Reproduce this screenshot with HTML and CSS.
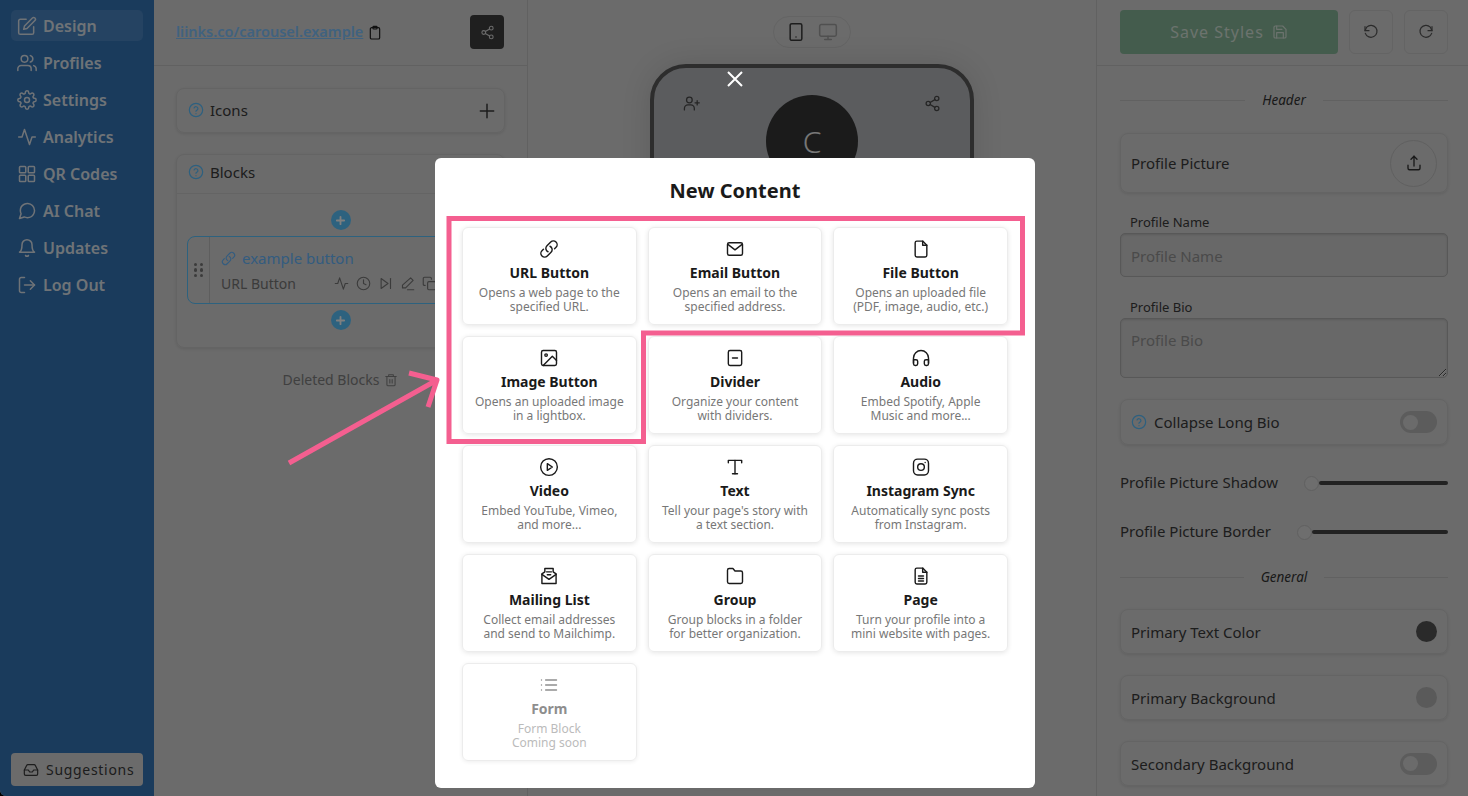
FILE: index.html
```html
<!DOCTYPE html>
<html lang="en">
<head>
    <meta charset="UTF-8">
    <meta name="viewport" content="width=device-width, initial-scale=1.0">
    <title>New Content</title>
    <link rel="stylesheet" href="styles.css">
</head>
<body>

<!-- Icon sprite -->
<svg class="sprite" xmlns="http://www.w3.org/2000/svg">
    <symbol id="i-edit" viewBox="0 0 24 24"><path d="M11 4H4a2 2 0 0 0-2 2v14a2 2 0 0 0 2 2h14a2 2 0 0 0 2-2v-7"/><path d="M18.5 2.5a2.121 2.121 0 0 1 3 3L12 15l-4 1 1-4 9.5-9.5z"/></symbol>
    <symbol id="i-users" viewBox="0 0 24 24"><path d="M17 21v-2a4 4 0 0 0-4-4H5a4 4 0 0 0-4 4v2"/><circle cx="9" cy="7" r="4"/><path d="M23 21v-2a4 4 0 0 0-3-3.87"/><path d="M16 3.13a4 4 0 0 1 0 7.75"/></symbol>
    <symbol id="i-gear" viewBox="0 0 24 24"><circle cx="12" cy="12" r="3"/><path d="M19.4 15a1.65 1.65 0 0 0 .33 1.82l.06.06a2 2 0 0 1 0 2.83 2 2 0 0 1-2.83 0l-.06-.06a1.65 1.65 0 0 0-1.82-.33 1.65 1.65 0 0 0-1 1.51V21a2 2 0 0 1-2 2 2 2 0 0 1-2-2v-.09A1.65 1.65 0 0 0 9 19.4a1.65 1.65 0 0 0-1.82.33l-.06.06a2 2 0 0 1-2.83 0 2 2 0 0 1 0-2.83l.06-.06a1.65 1.65 0 0 0 .33-1.82 1.65 1.65 0 0 0-1.51-1H3a2 2 0 0 1-2-2 2 2 0 0 1 2-2h.09A1.65 1.65 0 0 0 4.6 9a1.65 1.65 0 0 0-.33-1.82l-.06-.06a2 2 0 0 1 0-2.83 2 2 0 0 1 2.83 0l.06.06a1.65 1.65 0 0 0 1.82.33H9a1.65 1.65 0 0 0 1-1.51V3a2 2 0 0 1 2-2 2 2 0 0 1 2 2v.09a1.65 1.65 0 0 0 1 1.51 1.65 1.65 0 0 0 1.82-.33l.06-.06a2 2 0 0 1 2.83 0 2 2 0 0 1 0 2.83l-.06.06a1.65 1.65 0 0 0-.33 1.82V9a1.65 1.65 0 0 0 1.51 1H21a2 2 0 0 1 2 2 2 2 0 0 1-2 2h-.09a1.65 1.65 0 0 0-1.51 1z"/></symbol>
    <symbol id="i-activity" viewBox="0 0 24 24"><path d="M22 12h-4l-3 9L9 3l-3 9H2"/></symbol>
    <symbol id="i-qr" viewBox="0 0 24 24"><rect x="3" y="3" width="7.5" height="7.5" rx="1"/><rect x="13.5" y="3" width="7.5" height="7.5" rx="1"/><rect x="3" y="13.5" width="7.5" height="7.5" rx="1"/><rect x="13.5" y="13.5" width="7.5" height="7.5" rx="1"/></symbol>
    <symbol id="i-chat" viewBox="0 0 24 24"><path d="M21 11.5a8.38 8.38 0 0 1-.9 3.8 8.5 8.5 0 0 1-7.6 4.7 8.38 8.38 0 0 1-3.8-.9L3 21l1.9-5.7a8.38 8.38 0 0 1-.9-3.8 8.5 8.5 0 0 1 4.7-7.6 8.38 8.38 0 0 1 3.8-.9h.5a8.48 8.48 0 0 1 8 8v.5z"/></symbol>
    <symbol id="i-bell" viewBox="0 0 24 24"><path d="M18 8A6 6 0 0 0 6 8c0 7-3 9-3 9h18s-3-2-3-9"/><path d="M13.73 21a2 2 0 0 1-3.46 0"/></symbol>
    <symbol id="i-logout" viewBox="0 0 24 24"><path d="M9 21H5a2 2 0 0 1-2-2V5a2 2 0 0 1 2-2h4"/><path d="M16 17l5-5-5-5"/><path d="M21 12H9"/></symbol>
    <symbol id="i-inbox" viewBox="0 0 24 24"><path d="M22 12h-6l-2 3h-4l-2-3H2"/><path d="M5.45 5.11L2 12v6a2 2 0 0 0 2 2h16a2 2 0 0 0 2-2v-6l-3.45-6.89A2 2 0 0 0 16.76 4H7.24a2 2 0 0 0-1.79 1.11z"/></symbol>
    <symbol id="i-clipboard" viewBox="0 0 24 24"><rect x="5" y="4" width="14" height="17" rx="2"/><rect x="9" y="2" width="6" height="4" rx="1"/></symbol>
    <symbol id="i-share" viewBox="0 0 24 24"><circle cx="18" cy="5" r="3"/><circle cx="6" cy="12" r="3"/><circle cx="18" cy="19" r="3"/><path d="M8.6 13.5l6.8 4M15.4 6.5l-6.8 4"/></symbol>
    <symbol id="i-help" viewBox="0 0 24 24"><circle cx="12" cy="12" r="10"/><path d="M9.1 9a3 3 0 0 1 5.8 1c0 2-3 2.6-3 4"/><path d="M12 17.5h.01"/></symbol>
    <symbol id="i-plus" viewBox="0 0 24 24"><path d="M12 4v16M4 12h16"/></symbol>
    <symbol id="i-link" viewBox="0 0 24 24"><path d="M13.19 8.688a4.5 4.5 0 0 1 1.242 7.244l-4.5 4.5a4.5 4.5 0 0 1-6.364-6.364l1.757-1.757m13.35-.622 1.757-1.757a4.5 4.5 0 0 0-6.364-6.364l-4.5 4.5a4.5 4.5 0 0 0 1.242 7.244"/></symbol>
    <symbol id="i-clock" viewBox="0 0 24 24"><circle cx="12" cy="12" r="10"/><path d="M12 6v6l4 2"/></symbol>
    <symbol id="i-skip" viewBox="0 0 24 24"><path d="M5 4l11 8-11 8z"/><path d="M20 4v16"/></symbol>
    <symbol id="i-pencil" viewBox="0 0 24 24"><path d="M17 3l4 4L9 19H4v-4.5z"/><path d="M12 22h10"/></symbol>
    <symbol id="i-copy" viewBox="0 0 24 24"><rect x="9" y="9" width="13" height="13" rx="2"/><path d="M5 15H4a2 2 0 0 1-2-2V4a2 2 0 0 1 2-2h9a2 2 0 0 1 2 2v1"/></symbol>
    <symbol id="i-trash" viewBox="0 0 24 24"><path d="M3 6h18"/><path d="M8 6V3h8v3"/><path d="M5 6v14a2 2 0 0 0 2 2h10a2 2 0 0 0 2-2V6"/><path d="M10 11v6M14 11v6"/></symbol>
    <symbol id="i-phone" viewBox="0 0 24 24"><rect x="5" y="2" width="14" height="20" rx="2"/><path d="M12 18h.01"/></symbol>
    <symbol id="i-monitor" viewBox="0 0 24 24"><rect x="2" y="3" width="20" height="14" rx="2"/><path d="M8 21h8M12 17v4"/></symbol>
    <symbol id="i-user-plus" viewBox="0 0 24 24"><path d="M2 21v-2a5 5 0 0 1 5-5h4a5 5 0 0 1 5 5v2"/><circle cx="9" cy="7" r="4"/><path d="M20 8v6M17 11h6"/></symbol>
    <symbol id="i-save" viewBox="0 0 24 24"><path d="M19 21H5a2 2 0 0 1-2-2V5a2 2 0 0 1 2-2h11l5 5v11a2 2 0 0 1-2 2z"/><path d="M17 21v-8H7v8"/><path d="M7 3v5h8"/></symbol>
    <symbol id="i-undo" viewBox="0 0 24 24"><path d="M3 4v6h6"/><path d="M3.5 14a9 9 0 1 0 2.1-9.4L3 10"/></symbol>
    <symbol id="i-redo" viewBox="0 0 24 24"><path d="M21 4v6h-6"/><path d="M20.5 14a9 9 0 1 1-2.1-9.4L21 10"/></symbol>
    <symbol id="i-upload" viewBox="0 0 24 24"><path d="M4 15v4a2 2 0 0 0 2 2h12a2 2 0 0 0 2-2v-4"/><path d="M8 7l4-4 4 4"/><path d="M12 3v13"/></symbol>
    <symbol id="i-mail" viewBox="0 0 24 24"><rect x="3" y="4.5" width="18" height="15" rx="2"/><path d="M3.5 6.5L12 13l8.500-6.500"/></symbol>
    <symbol id="i-file" viewBox="0 0 24 24"><path d="M14 2.500H7a2 2 0 0 0-2 2v15a2 2 0 0 0 2 2h10a2 2 0 0 0 2-2V7.500z"/><path d="M14 2.500v5h5"/></symbol>
    <symbol id="i-image" viewBox="0 0 24 24"><rect x="3" y="3" width="18" height="18" rx="2"/><circle cx="8.500" cy="8.500" r="1.500"/><path d="M21 15l-5-5L5 21"/></symbol>
    <symbol id="i-divider" viewBox="0 0 24 24"><rect x="4" y="3" width="16" height="18" rx="2"/><path d="M9 12h6"/></symbol>
    <symbol id="i-headphones" viewBox="0 0 24 24"><path d="M3 18v-6a9 9 0 0 1 18 0v6"/><path d="M21 19a2 2 0 0 1-2 2h-1a2 2 0 0 1-2-2v-3a2 2 0 0 1 2-2h3zM3 19a2 2 0 0 0 2 2h1a2 2 0 0 0 2-2v-3a2 2 0 0 0-2-2H3z"/></symbol>
    <symbol id="i-play" viewBox="0 0 24 24"><circle cx="12" cy="12" r="10"/><path d="M10 8l6 4-6 4z"/></symbol>
    <symbol id="i-text" viewBox="0 0 24 24"><path d="M4 7V4h16v3"/><path d="M12 4v16"/><path d="M9 20h6"/></symbol>
    <symbol id="i-instagram" viewBox="0 0 24 24"><rect x="3" y="2.500" width="18" height="19" rx="5"/><circle cx="12" cy="12" r="4"/><path d="M17 6.500h.01"/></symbol>
    <symbol id="i-mailing" viewBox="0 0 24 24"><path d="M3.500 9.500L7 7V3h10v4l3.500 2.500V21h-17z"/><path d="M3.500 10l8.500 6 8.500-6"/><path d="M9 7h6M10 10.500h4"/></symbol>
    <symbol id="i-folder" viewBox="0 0 24 24"><path d="M21 19a2 2 0 0 1-2 2H5a2 2 0 0 1-2-2V5a2 2 0 0 1 2-2h4.500l2.500 3h7a2 2 0 0 1 2 2z"/></symbol>
    <symbol id="i-page" viewBox="0 0 24 24"><path d="M14 2.500H7a2 2 0 0 0-2 2v15a2 2 0 0 0 2 2h10a2 2 0 0 0 2-2V7.500z"/><path d="M14 2.500v5h5"/><path d="M9 12h6M9 15h6M9 18h6"/></symbol>
    <symbol id="i-list" viewBox="0 0 24 24"><path d="M8 6h13M8 12h13M8 18h13"/><path d="M3 6h.01M3 12h.01M3 18h.01"/></symbol>
</svg>

<div class="app">
    <!-- Sidebar -->
    <aside class="sidebar">
        <a class="nav-item active"><svg class="icon"><use href="#i-edit"/></svg>Design</a>
        <a class="nav-item"><svg class="icon"><use href="#i-users"/></svg>Profiles</a>
        <a class="nav-item"><svg class="icon"><use href="#i-gear"/></svg>Settings</a>
        <a class="nav-item"><svg class="icon"><use href="#i-activity"/></svg>Analytics</a>
        <a class="nav-item"><svg class="icon"><use href="#i-qr"/></svg>QR Codes</a>
        <a class="nav-item"><svg class="icon"><use href="#i-chat"/></svg>AI Chat</a>
        <a class="nav-item"><svg class="icon"><use href="#i-bell"/></svg>Updates</a>
        <a class="nav-item"><svg class="icon"><use href="#i-logout"/></svg>Log Out</a>
        <button class="suggestions"><svg class="icon"><use href="#i-inbox"/></svg>Suggestions</button>
    </aside>

    <!-- Blocks panel -->
    <section class="panel-left">
        <div class="panel-head">
            <a class="page-link">liinks.co/carousel.example</a>
            <svg class="icon icon-clip"><use href="#i-clipboard"/></svg>
            <button class="share-btn"><svg class="icon"><use href="#i-share"/></svg></button>
        </div>
        <div class="panel-body">
            <div class="card icons-card">
                <svg class="icon help"><use href="#i-help"/></svg>
                <span>Icons</span>
                <svg class="icon icon-plus"><use href="#i-plus"/></svg>
            </div>
            <div class="card blocks-card">
                <div class="blocks-head">
                    <svg class="icon help"><use href="#i-help"/></svg>
                    <span>Blocks</span>
                </div>
                <div class="blocks-body">
                    <span class="add-btn"><svg class="icon"><use href="#i-plus"/></svg></span>
                    <div class="block-item">
                        <div class="drag"><span></span><span></span><span></span><span></span><span></span><span></span></div>
                        <div class="block-main">
                            <div class="block-title"><svg class="icon"><use href="#i-link"/></svg>example button</div>
                            <div class="block-sub">
                                <span>URL Button</span>
                                <span class="block-tools">
                                    <svg class="icon"><use href="#i-activity"/></svg>
                                    <svg class="icon"><use href="#i-clock"/></svg>
                                    <svg class="icon"><use href="#i-skip"/></svg>
                                    <svg class="icon"><use href="#i-pencil"/></svg>
                                    <svg class="icon"><use href="#i-copy"/></svg>
                                </span>
                            </div>
                        </div>
                    </div>
                    <span class="add-btn"><svg class="icon"><use href="#i-plus"/></svg></span>
                </div>
            </div>
            <div class="deleted">Deleted Blocks <svg class="icon"><use href="#i-trash"/></svg></div>
        </div>
    </section>

    <!-- Preview -->
    <section class="panel-center">
        <div class="device-toggle">
            <svg class="icon on"><use href="#i-phone"/></svg>
            <svg class="icon"><use href="#i-monitor"/></svg>
        </div>
        <div class="phone">
            <svg class="icon"><use href="#i-user-plus"/></svg>
            <div class="avatar">C</div>
            <svg class="icon"><use href="#i-share"/></svg>
        </div>
    </section>

    <!-- Styles panel -->
    <section class="panel-right">
        <div class="save-row">
            <button class="save-btn">Save Styles <svg class="icon"><use href="#i-save"/></svg></button>
            <button class="square-btn"><svg class="icon"><use href="#i-undo"/></svg></button>
            <button class="square-btn"><svg class="icon"><use href="#i-redo"/></svg></button>
        </div>
        <div class="panel-scroll">
            <div class="section-title">Header</div>
            <div class="card row-card picture-card">
                <span>Profile Picture</span>
                <span class="upload"><svg class="icon"><use href="#i-upload"/></svg></span>
            </div>
            <label class="field-label">Profile Name</label>
            <input class="field" type="text" placeholder="Profile Name">
            <label class="field-label bio-label">Profile Bio</label>
            <textarea class="field field-bio" placeholder="Profile Bio"></textarea>
            <div class="card row-card collapse-card">
                <span class="with-help"><svg class="icon help"><use href="#i-help"/></svg>Collapse Long Bio</span>
                <span class="switch"></span>
            </div>
            <div class="slider-row shadow-row"><span>Profile Picture Shadow</span><i class="knob"></i><i class="track"></i></div>
            <div class="slider-row border-row"><span>Profile Picture Border</span><i class="knob"></i><i class="track"></i></div>
            <div class="section-title general-title">General</div>
            <div class="card row-card first-color"><span>Primary Text Color</span><span class="swatch swatch-dark"></span></div>
            <div class="card row-card color-card"><span>Primary Background</span><span class="swatch swatch-light"></span></div>
            <div class="card row-card color-card"><span>Secondary Background</span><span class="switch"></span></div>
        </div>
    </section>
</div>

<!-- Modal -->
<div class="overlay">
    <button class="close-btn" aria-label="Close"><svg viewBox="0 0 16 16"><path d="M1 1l14 14M15 1L1 15"/></svg></button>
    <div class="modal">
        <h2>New Content</h2>
        <div class="content-grid">
            <div class="tile"><svg class="icon"><use href="#i-link"/></svg><h3>URL Button</h3><p>Opens a web page to the specified URL.</p></div>
            <div class="tile"><svg class="icon"><use href="#i-mail"/></svg><h3>Email Button</h3><p>Opens an email to the specified address.</p></div>
            <div class="tile"><svg class="icon"><use href="#i-file"/></svg><h3>File Button</h3><p>Opens an uploaded file (PDF, image, audio, etc.)</p></div>
            <div class="tile"><svg class="icon"><use href="#i-image"/></svg><h3>Image Button</h3><p>Opens an uploaded image in a lightbox.</p></div>
            <div class="tile"><svg class="icon"><use href="#i-divider"/></svg><h3>Divider</h3><p>Organize your content with dividers.</p></div>
            <div class="tile"><svg class="icon"><use href="#i-headphones"/></svg><h3>Audio</h3><p>Embed Spotify, Apple Music and more...</p></div>
            <div class="tile"><svg class="icon"><use href="#i-play"/></svg><h3>Video</h3><p>Embed YouTube, Vimeo, and more...</p></div>
            <div class="tile"><svg class="icon"><use href="#i-text"/></svg><h3>Text</h3><p>Tell your page's story with a text section.</p></div>
            <div class="tile"><svg class="icon"><use href="#i-instagram"/></svg><h3>Instagram Sync</h3><p>Automatically sync posts from Instagram.</p></div>
            <div class="tile"><svg class="icon"><use href="#i-mailing"/></svg><h3>Mailing List</h3><p>Collect email addresses and send to Mailchimp.</p></div>
            <div class="tile"><svg class="icon"><use href="#i-folder"/></svg><h3>Group</h3><p>Group blocks in a folder for better organization.</p></div>
            <div class="tile"><svg class="icon"><use href="#i-page"/></svg><h3>Page</h3><p>Turn your profile into a mini website with pages.</p></div>
            <div class="tile disabled"><svg class="icon"><use href="#i-list"/></svg><h3>Form</h3><p>Form Block<br>Coming soon</p></div>
        </div>
    </div>
</div>

<!-- Pink annotation drawn on top of the screenshot -->
<svg class="annotation" viewBox="0 0 1468 796">
    <path d="M449 218.500H1022.500V333H643.500V441.500H449Z"/>
    <path class="arrow" d="M289 463L437 380M409 373L437 380L428 407"/>
</svg>

</body>
</html>
```
FILE: styles.css
```css
* {
    box-sizing: border-box;
}
html, body {
    margin: 0;
    height: 100%;
    overflow: hidden;
}
body {
    font-family: "Noto Sans", "Open Sans", sans-serif;
    font-size: 15px;
    color: #3a3a3a;
    background-color: #000;
}
button {
    font-family: inherit;
}
.sprite {
    display: none;
}
.icon {
    width: 20px;
    height: 20px;
    flex: none;
    fill: none;
    stroke: currentColor;
    stroke-width: 1.8;
    stroke-linecap: round;
    stroke-linejoin: round;
}

/* App behind the modal */
.app {
    display: flex;
    height: 100vh;
    background-color: #d6d6d6;
    border-bottom-left-radius: 6px;
    overflow: hidden;
}
.sidebar {
    width: 154px;
    flex: none;
    display: flex;
    flex-direction: column;
    gap: 6px;
    padding: 10px 11px;
    background-color: #3476b8;
}
.nav-item {
    display: flex;
    align-items: center;
    gap: 6px;
    height: 31px;
    padding: 0 6px;
    border-radius: 5px;
    color: #dfe6ee;
    font-size: 16px;
    font-weight: 600;
}
.nav-item.active {
    background-color: #4a86c4;
}
.suggestions {
    display: flex;
    align-items: center;
    gap: 7px;
    height: 33px;
    margin-top: auto;
    padding: 0 12px;
    border: none;
    border-radius: 4px;
    background-color: #d6d6d6;
    color: #3a3a3a;
    font-size: 14px;
    letter-spacing: 0.7px;
}
.suggestions .icon {
    width: 16px;
    height: 16px;
}

/* Left panel */
.panel-left {
    width: 373px;
    flex: none;
}
.panel-head {
    display: flex;
    align-items: center;
    height: 66px;
    padding: 0 23px 0 22px;
    border-bottom: 1px solid #c2c2c2;
}
.page-link {
    margin-bottom: 3px;
    color: #80c4ff;
    font-size: 14.500px;
    font-weight: 600;
    text-decoration: underline;
}
.icon-clip {
    width: 16px;
    height: 16px;
    margin-left: 4px;
    color: #222;
}
.share-btn {
    display: flex;
    align-items: center;
    justify-content: center;
    width: 34px;
    height: 34px;
    margin: 0 0 1px auto;
    padding: 0;
    border: none;
    border-radius: 4px;
    background-color: #3e3e3e;
    color: #d6d6d6;
}
.share-btn .icon {
    width: 15px;
    height: 15px;
}
.panel-body {
    padding: 22px;
}
.card {
    border: 1px solid #c8c8c8;
    border-radius: 8px;
    box-shadow: 0 1px 3px rgba(0, 0, 0, 0.1);
}
.icons-card {
    display: flex;
    align-items: center;
    gap: 6px;
    height: 45px;
    padding: 0 11px 2px;
}
.help {
    width: 16px;
    height: 16px;
    color: #5ac0ff;
    stroke-width: 1.8;
}
.icon-plus {
    width: 20px;
    height: 20px;
    margin: 2px -4px 0 auto;
    color: #3a3a3a;
}
.blocks-card {
    margin-top: 21px;
    height: 194px;
}
.blocks-head {
    display: flex;
    align-items: center;
    gap: 6px;
    height: 39px;
    padding: 0 11px 4px;
    border-bottom: 1px solid #c8c8c8;
}
.blocks-body {
    display: flex;
    flex-direction: column;
    align-items: center;
    padding: 16px 10px 0;
}
.add-btn {
    display: flex;
    align-items: center;
    justify-content: center;
    width: 20px;
    height: 20px;
    border-radius: 50%;
    background-color: #5ac4ff;
    color: #fff;
}
.add-btn .icon {
    width: 11px;
    height: 11px;
    stroke-width: 4;
}
.block-item {
    display: flex;
    align-self: stretch;
    height: 68px;
    margin: 6px 0;
    border: 1px solid #5ac4ff;
    border-radius: 8px;
}
.drag {
    display: grid;
    grid-template-columns: 4px 4px;
    gap: 2px;
    align-content: center;
    justify-content: center;
    width: 22px;
    flex: none;
    border-right: 1px solid #bdbdbd;
}
.drag span {
    width: 3.500px;
    height: 3.500px;
    border-radius: 50%;
    background-color: #777;
}
.block-main {
    flex: 1;
    padding: 11px 0 0 11px;
    min-width: 0;
}
.block-title {
    display: flex;
    align-items: center;
    gap: 6px;
    color: #66b8ff;
}
.block-title .icon {
    width: 15px;
    height: 15px;
}
.block-sub {
    display: flex;
    align-items: center;
    margin-top: 6px;
    font-size: 14px;
    color: #777;
}
.block-tools {
    display: flex;
    gap: 7px;
    margin-left: 38px;
}
.block-tools .icon {
    width: 15px;
    height: 15px;
}
.deleted {
    display: flex;
    align-items: center;
    justify-content: center;
    gap: 5px;
    margin-top: 22px;
    font-size: 14px;
    color: #808080;
}
.deleted .icon {
    width: 14px;
    height: 14px;
}

/* Center preview */
.panel-center {
    display: flex;
    flex-direction: column;
    align-items: center;
    width: 570px;
    flex: none;
    padding-top: 16px;
    border-left: 1px solid #c2c2c2;
    border-right: 1px solid #c2c2c2;
}
.device-toggle {
    display: flex;
    align-items: center;
    justify-content: center;
    gap: 12px;
    width: 78px;
    height: 32px;
    flex: none;
    border: 1px solid #c8c8c8;
    border-radius: 16px;
    color: #a0a0a0;
}
.device-toggle .on {
    color: #3a3a3a;
}
.phone {
    display: flex;
    justify-content: space-between;
    align-items: flex-start;
    width: 324px;
    height: 700px;
    margin-top: 16px;
    padding: 27px 29px 0;
    border: 4px solid #5a5a5a;
    border-radius: 36px;
    background-color: #b6b8bc;
    box-shadow: 0 0 30px rgba(0, 0, 0, 0.12);
    color: #4a4a4a;
    flex: none;
}
.phone .icon {
    width: 17px;
    height: 17px;
}
.avatar {
    display: flex;
    align-items: center;
    justify-content: center;
    width: 92px;
    height: 92px;
    border-radius: 50%;
    background-color: #363636;
    color: #eee;
    font-size: 30px;
    font-weight: 300;
}

/* Right panel */
.panel-right {
    flex: 1;
    min-width: 0;
}
.save-row {
    display: flex;
    gap: 11px;
    height: 66px;
    padding: 10px 20px 11px 23px;
    border-bottom: 1px solid #c2c2c2;
}
.save-btn {
    display: flex;
    align-items: center;
    justify-content: center;
    gap: 8px;
    flex: 1;
    border: none;
    border-radius: 4px;
    background-color: #88b89a;
    color: #d8e6dc;
    font-size: 16px;
    letter-spacing: 1px;
}
.save-btn .icon {
    width: 16px;
    height: 16px;
}
.square-btn {
    display: flex;
    align-items: center;
    justify-content: center;
    width: 44px;
    flex: none;
    padding: 0;
    border: 1px solid #c8c8c8;
    border-radius: 6px;
    background: none;
    color: #555;
}
.square-btn .icon {
    width: 16px;
    height: 16px;
}
.panel-scroll {
    padding: 24px 20px 0 23px;
}
.section-title {
    display: flex;
    align-items: center;
    gap: 17px;
    height: 20px;
    font-size: 13.500px;
    font-style: italic;
    color: #333;
}
.section-title::before,
.section-title::after {
    content: "";
    flex: 1;
    height: 1px;
    background-color: #c2c2c2;
}
.row-card {
    display: flex;
    align-items: center;
    justify-content: space-between;
    padding: 0 10px;
}
.picture-card {
    height: 60px;
    margin-top: 23px;
}
.upload {
    display: flex;
    align-items: center;
    justify-content: center;
    width: 47px;
    height: 47px;
    border: 1px solid #c0c0c0;
    border-radius: 50%;
    color: #333;
}
.upload .icon {
    width: 18px;
    height: 18px;
}
.field-label {
    display: block;
    height: 20px;
    margin-top: 20px;
    padding-left: 10px;
    font-size: 13px;
    line-height: 18px;
}
.bio-label {
    margin-top: 21px;
}
.field {
    display: block;
    width: 100%;
    height: 44px;
    padding: 2px 10px 0;
    border: 1px solid #b0b0b0;
    border-radius: 5px;
    background-color: #d0d0d0;
    box-shadow: inset 0 1px 2px rgba(0, 0, 0, 0.12);
    font-family: inherit;
    font-size: 15px;
    color: #3a3a3a;
}
.field::placeholder {
    color: #959595;
}
.field-bio {
    height: 60px;
    padding-top: 11px;
    margin: 0;
    resize: vertical;
}
.collapse-card {
    height: 46px;
    margin-top: 21px;
}
.with-help {
    display: flex;
    align-items: center;
    gap: 7px;
}
.switch {
    display: flex;
    align-items: center;
    width: 37px;
    height: 22px;
    padding: 0 3px;
    border-radius: 11px;
    background-color: #b8b8b8;
}
.switch::before {
    content: "";
    width: 15px;
    height: 15px;
    border-radius: 50%;
    background-color: #d6d6d6;
}
.slider-row {
    display: flex;
    align-items: center;
    height: 20px;
}
.shadow-row {
    margin-top: 27px;
}
.border-row {
    margin-top: 29px;
}
.slider-row span {
    margin-right: 26px;
}
.knob {
    width: 15px;
    height: 15px;
    flex: none;
    margin-top: 2px;
    border: 1px solid #c0c0c0;
    border-radius: 50%;
    background-color: #dcdcdc;
}
.track {
    flex: 1;
    height: 4px;
    margin-top: 2px;
    border-radius: 2px;
    background-color: #444;
}
.general-title {
    margin-top: 26px;
}
.first-color {
    height: 45px;
    margin-top: 22px;
}
.color-card {
    height: 45px;
    margin-top: 21px;
}
.swatch {
    width: 21px;
    height: 21px;
    border-radius: 50%;
}
.swatch-dark {
    background-color: #555;
}
.swatch-light {
    background-color: #b4b4b4;
}

/* Modal */
.overlay {
    position: fixed;
    inset: 0;
    display: flex;
    flex-direction: column;
    align-items: center;
    padding: 71px 0 0 2px;
    background-color: rgba(0, 0, 0, 0.5);
    backdrop-filter: blur(0.5px);
}
.close-btn {
    width: 16px;
    height: 16px;
    flex: none;
    padding: 0;
    border: none;
    background: none;
}
.close-btn svg {
    display: block;
    width: 16px;
    height: 16px;
    fill: none;
    stroke: #fff;
    stroke-width: 2;
}
.modal {
    width: 600px;
    height: 630px;
    flex: none;
    margin-top: 71px;
    padding: 21px 27px 0;
    border-radius: 6px;
    background-color: #fff;
    color: #1a1a1a;
}
.modal h2 {
    margin: 0;
    height: 24px;
    font-size: 20px;
    line-height: 24px;
    font-weight: 700;
    text-align: center;
}
.content-grid {
    display: grid;
    grid-template-columns: repeat(3, 1fr);
    grid-auto-rows: 98px;
    gap: 10.900px 11px;
    margin-top: 24px;
}
.tile {
    display: flex;
    flex-direction: column;
    align-items: center;
    padding: 11px 11px 0;
    border: 1px solid #ececec;
    border-radius: 6px;
    box-shadow: 0 1px 5px rgba(0, 0, 0, 0.1);
    text-align: center;
}
.tile .icon {
    color: #1a1a1a;
    stroke-width: 1.700;
}
.tile h3 {
    margin: 5px 0 0;
    font-size: 14px;
    line-height: 18px;
    font-weight: 700;
}
.tile p {
    margin: 4px 0 0;
    font-size: 12px;
    line-height: 14.400px;
    color: #777;
}
.tile.disabled {
    box-shadow: 0 1px 4px rgba(0, 0, 0, 0.07);
}
.tile.disabled .icon,
.tile.disabled h3 {
    color: #8e8e8e;
}
.tile.disabled p {
    color: #bbb;
}

/* Annotation */
.annotation {
    position: fixed;
    inset: 0;
    width: 1468px;
    height: 796px;
    fill: none;
    stroke: #f45f90;
    stroke-width: 5;
    pointer-events: none;
}
.annotation .arrow {
    stroke-linejoin: round;
}
```
